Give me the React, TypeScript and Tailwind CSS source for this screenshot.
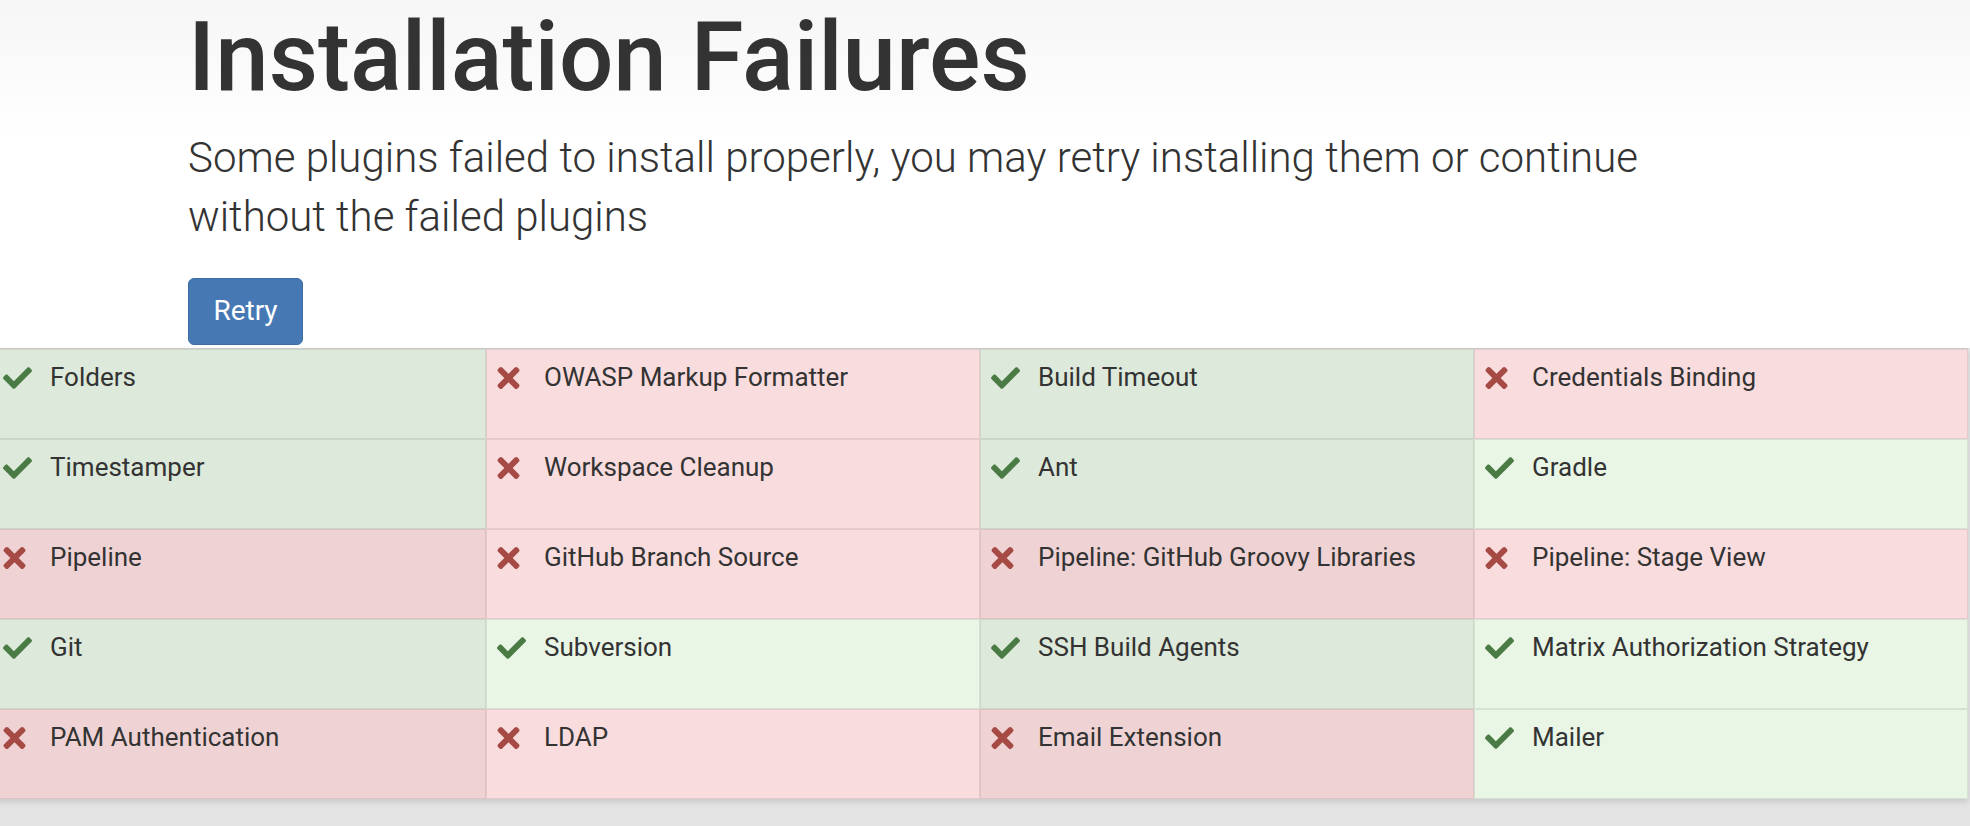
import { type ReactNode } from 'react';

type Status = 'ok' | 'fail';

type Plugin = {
  name: string;
  status: Status;
  tone: string;
};

// cell shades differ a little from cell to cell in the wizard
const OK = 'bg-[#dde9da]';
const OK_LIGHT = 'bg-[#e9f6e6]';
const FAIL = 'bg-[#f9dcdd]';
const FAIL_DARK = 'bg-[#efd3d4]';

const PLUGINS: Plugin[] = [
  { name: 'Folders', status: 'ok', tone: OK },
  { name: 'OWASP Markup Formatter', status: 'fail', tone: FAIL },
  { name: 'Build Timeout', status: 'ok', tone: OK },
  { name: 'Credentials Binding', status: 'fail', tone: FAIL },
  { name: 'Timestamper', status: 'ok', tone: OK },
  { name: 'Workspace Cleanup', status: 'fail', tone: FAIL },
  { name: 'Ant', status: 'ok', tone: OK },
  { name: 'Gradle', status: 'ok', tone: OK_LIGHT },
  { name: 'Pipeline', status: 'fail', tone: FAIL_DARK },
  { name: 'GitHub Branch Source', status: 'fail', tone: FAIL },
  { name: 'Pipeline: GitHub Groovy Libraries', status: 'fail', tone: FAIL_DARK },
  { name: 'Pipeline: Stage View', status: 'fail', tone: FAIL },
  { name: 'Git', status: 'ok', tone: OK },
  { name: 'Subversion', status: 'ok', tone: OK_LIGHT },
  { name: 'SSH Build Agents', status: 'ok', tone: OK },
  { name: 'Matrix Authorization Strategy', status: 'ok', tone: OK_LIGHT },
  { name: 'PAM Authentication', status: 'fail', tone: FAIL_DARK },
  { name: 'LDAP', status: 'fail', tone: FAIL },
  { name: 'Email Extension', status: 'fail', tone: FAIL_DARK },
  { name: 'Mailer', status: 'ok', tone: OK_LIGHT },
];

function CheckIcon() {
  return (
    <svg viewBox="0 64 512 384" className="h-[22px] w-[29px] fill-[#4a7b44]" aria-hidden="true">
      <path d="M173.898 439.404l-166.4-166.4c-9.997-9.997-9.997-26.206 0-36.204l36.203-36.204c9.997-9.998 26.207-9.998 36.204 0L192 312.69 432.095 72.596c9.997-9.997 26.207-9.997 36.204 0l36.203 36.204c9.997 9.997 9.997 26.206 0 36.204l-294.4 294.401c-9.998 9.997-26.207 9.997-36.204-.001z" />
    </svg>
  );
}

function TimesIcon() {
  return (
    <svg viewBox="0 80 352 352" className="h-[22px] w-[23px] fill-[#a64a45]" aria-hidden="true">
      <path d="M242.72 256l100.07-100.07c12.28-12.28 12.28-32.19 0-44.48l-22.24-22.24c-12.28-12.28-32.19-12.28-44.48 0L176 189.28 75.93 89.21c-12.28-12.28-32.19-12.28-44.48 0L9.21 111.45c-12.28 12.28-12.28 32.19 0 44.48L109.28 256 9.21 356.07c-12.28 12.28-12.28 32.19 0 44.48l22.24 22.24c12.28 12.28 32.2 12.28 44.48 0L176 322.72l100.07 100.07c12.28 12.28 32.2 12.28 44.48 0l22.24-22.24c12.28-12.28 12.28-32.19 0-44.48L242.72 256z" />
    </svg>
  );
}

function PluginCell({ plugin }: { plugin: Plugin }): ReactNode {
  return (
    <div
      className={`flex h-[90px] items-start border border-[#00000014] pl-[10px] pt-[9px] ${plugin.tone}`}
    >
      <div className="mt-[8px] w-[30px] shrink-0">
        {plugin.status === 'ok' ? <CheckIcon /> : <TimesIcon />}
      </div>
      <span className="ml-[17px] text-[26px] leading-[36px] text-[#333]">{plugin.name}</span>
    </div>
  );
}

export default function App() {
  return (
    <div
      className="h-[826px] overflow-hidden bg-[#e4e4e4]"
      style={{ fontFamily: 'Roboto, "Open Sans", sans-serif' }}
    >
      <div className="bg-gradient-to-b from-[#f6f6f6] via-white via-40% to-white pl-[188px] pt-[5px]">
        <h1 className="text-[96px] font-medium leading-[1.1] text-[#333]">Installation Failures</h1>
        <p className="mt-[17px] max-w-[1520px] text-[42px] font-light leading-[59px] text-[#333]">
          Some plugins failed to install properly, you may retry installing them or continue without
          the failed plugins
        </p>
        <div className="pb-[3px] pt-[32px]">
          <button className="h-[67px] w-[115px] rounded-[6px] border border-[#3a6ea6] bg-[#4679b3] text-[28px] text-white">
            Retry
          </button>
        </div>
      </div>

      <div className="-ml-[8px] grid w-[1976px] grid-cols-4 border-t border-[#cccccc] bg-white shadow-[0_3px_6px_rgba(0,0,0,0.12)]">
        {PLUGINS.map((p) => (
          <PluginCell key={p.name} plugin={p} />
        ))}
      </div>
    </div>
  );
}
